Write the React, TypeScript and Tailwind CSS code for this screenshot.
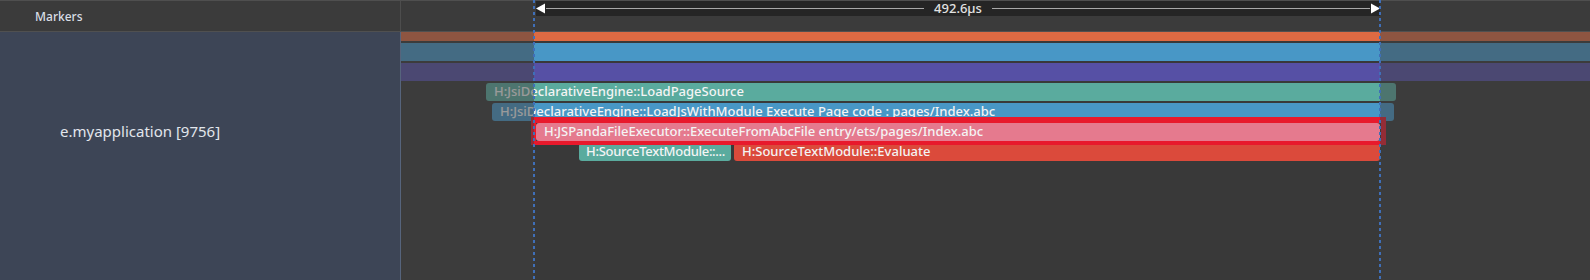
import React from "react";

type Slice = {
  left: number;
  width: number;
  color: string;
  label: string;
  tight?: boolean;
};

// rows of the trace, x relative to the timeline canvas (starts at page x=401)
const sliceRows: Slice[][] = [
  [{ left: 85, width: 910, color: "bg-[#5aab9e]", label: "H:JsiDeclarativeEngine::LoadPageSource" }],
  [
    {
      left: 91,
      width: 902,
      color: "bg-[#4897c6]",
      label: "H:JsiDeclarativeEngine::LoadJsWithModule Execute Page code : pages/Index.abc",
    },
  ],
  [
    {
      left: 135,
      width: 844,
      color: "bg-[#e57a8e]",
      label: "H:JSPandaFileExecutor::ExecuteFromAbcFile entry/ets/pages/Index.abc",
    },
  ],
  [
    { left: 178, width: 152, color: "bg-[#5aab9e]", label: "H:SourceTextModule::...", tight: true },
    { left: 333, width: 646, color: "bg-[#db4a3b]", label: "H:SourceTextModule::Evaluate" },
  ],
];

function SliceRow({ slices }: { slices: Slice[] }) {
  return (
    <div className="relative h-[18px]">
      {slices.map((s) => (
        <div
          key={s.label}
          className={`absolute top-0 h-[18px] rounded-[3px] ${s.color} ${
            s.tight ? "pl-[7px] tracking-[-0.3px]" : "pl-2"
          } flex items-center overflow-hidden whitespace-nowrap text-[13px] font-medium text-[#f4f4f4]`}
          style={{ left: s.left, width: s.width }}
        >
          {s.label}
        </div>
      ))}
    </div>
  );
}

function DashedLine({ left }: { left: number }) {
  return (
    <div
      className="absolute top-0 bottom-0 w-[2px] bg-[repeating-linear-gradient(to_bottom,#3f6fb8_0px,#3f6fb8_3px,transparent_3px,transparent_6px)]"
      style={{ left }}
    />
  );
}

function Ruler() {
  return (
    <div className="absolute left-[135px] w-[844px] top-0 h-[15px] bg-[#252525] flex items-center">
      <svg width="10" height="11" viewBox="0 0 10 11" className="shrink-0">
        <polygon points="0,5.5 9,0.5 9,10.5" fill="#ffffff" />
      </svg>
      <div className="flex-1 h-px bg-[#a8a8a8]" />
      <span className="px-[10px] text-[13px] font-medium text-[#e2e2e2] leading-none">492.6µs</span>
      <div className="flex-1 h-px bg-[#a8a8a8]" />
      <svg width="10" height="11" viewBox="0 0 10 11" className="shrink-0">
        <polygon points="10,5.5 1,0.5 1,10.5" fill="#ffffff" />
      </svg>
    </div>
  );
}

export default function App() {
  return (
    <div
      className="relative w-[1590px] h-[280px] overflow-hidden bg-[#393939]"
      style={{ fontFamily: '"Noto Sans", "Open Sans", sans-serif' }}
    >
      {/* header row */}
      <div className="flex h-[32px] border-t border-b border-t-[#4f4f4f] border-b-[#505050] bg-[#3b3b3b]">
        <div className="w-[401px] shrink-0 border-r border-[#4d4d4d] flex items-center pl-[35px] pt-[2px] text-[12px] font-medium text-[#d9dee6]">
          Markers
        </div>
        <div className="relative flex-1">
          <Ruler />
        </div>
      </div>

      {/* process row */}
      <div className="flex h-[248px]">
        <div className="w-[401px] shrink-0 bg-[#3d4556] border-r border-[#56647c] pl-[60px] pt-[89px] text-[15px] leading-[20px] text-[#e2e6ec]">
          e.myapplication [9756]
        </div>
        <div className="relative flex-1 flex flex-col gap-[2px]">
          <div className="h-[9px] bg-[#dd6a43]" />
          <div className="h-[18px] bg-[#4897c6]" />
          <div className="h-[18px] bg-[#5650a5]" />
          {sliceRows.map((row, i) => (
            <SliceRow key={i} slices={row} />
          ))}

          {/* selection frame */}
          <div className="absolute left-[130px] top-[85px] w-[855px] h-[28px] border-x-[5px] border-t-[6px] border-b-[4px] border-[#e8192c]" />

          {/* dimmed area outside the measured range */}
          <div className="absolute left-0 top-0 bottom-0 w-[133px] bg-[#404040]/50" />
          <div className="absolute left-[979px] right-0 top-0 bottom-0 bg-[#404040]/50" />
        </div>
      </div>

      <DashedLine left={533} />
      <DashedLine left={1379} />
    </div>
  );
}
